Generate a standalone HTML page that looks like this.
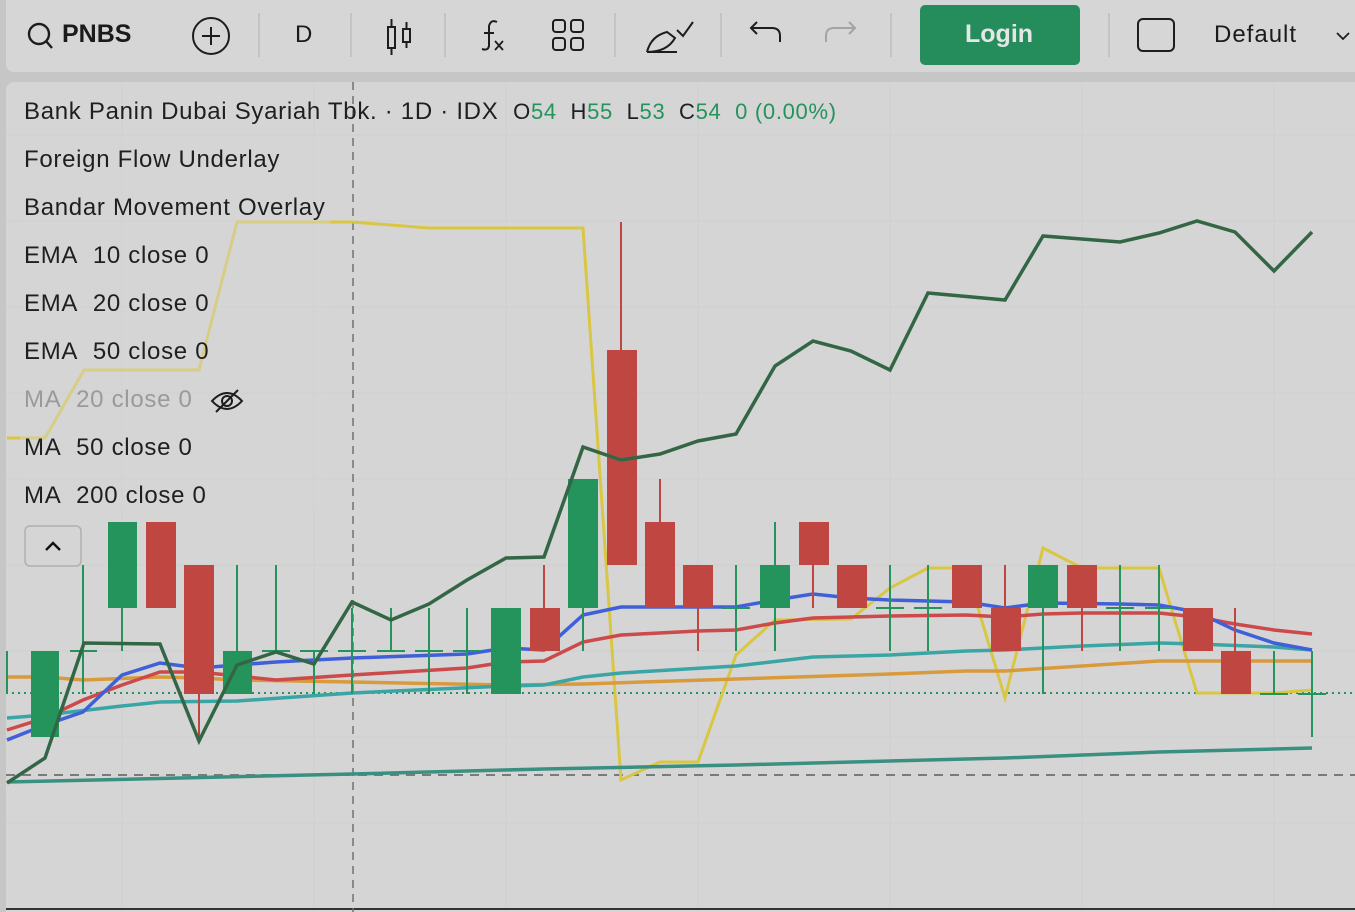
<!DOCTYPE html>
<html><head><meta charset="utf-8"><style>
body{margin:0;width:1355px;height:912px;overflow:hidden;background:#c6c6c6;font-family:"Liberation Sans",sans-serif;position:relative}
.tb{position:absolute;left:6px;top:0;width:1355px;height:72px;background:#d6d6d6;border-radius:0 0 8px 8px}
.chart{position:absolute;left:6px;top:82px;width:1349px;height:830px;background:#d5d5d5;border-radius:8px 0 0 0}
.t{position:absolute;font-size:24px;color:#1b1b1b;white-space:nowrap}
.sep{position:absolute;top:13px;width:2px;height:44px;background:#c4c4c4}
.lg{position:absolute;left:24px;font-size:24px;letter-spacing:0.7px;color:#1d1f22;white-space:nowrap}
.g{color:#24935c}
</style></head><body>
<div class="tb"></div>
<div class="chart"></div>
<svg style="position:absolute;left:0;top:0" width="1355" height="912">
<g fill="none" stroke="#1d1d1d" stroke-width="2.4">
<circle cx="39" cy="34" r="10"/><line x1="46" y1="41" x2="52" y2="48"/>
</g>
<g fill="none" stroke="#1d1d1d" stroke-width="2">
<circle cx="211" cy="36" r="18"/><line x1="211" y1="27" x2="211" y2="45"/><line x1="202" y1="36" x2="220" y2="36"/>
<rect x="388" y="27" width="7" height="21"/><line x1="391.5" y1="19" x2="391.5" y2="27"/><line x1="391.5" y1="48" x2="391.5" y2="55"/>
<rect x="403" y="29" width="7" height="13"/><line x1="406.5" y1="22" x2="406.5" y2="29"/><line x1="406.5" y1="42" x2="406.5" y2="48"/>
<path d="M497 22 q-6 -3 -8 4 l0 20 q-1 5 -7 3"/><line x1="484" y1="33" x2="494" y2="33"/><path d="M495 41 l8 9 M503 41 l-8 9" stroke-width="1.8"/>
<rect x="553" y="20" width="12" height="12" rx="3"/><rect x="571" y="20" width="12" height="12" rx="3"/><rect x="553" y="38" width="12" height="12" rx="3"/><rect x="571" y="38" width="12" height="12" rx="3"/>
<path d="M647 52 l30 0 M647 52 q4 -16 20 -20 l8 6 q-8 14 -28 14 M677 30 l6 6 l10 -14"/>
<path d="M757 34 l-6 -6 6 -6 M752 28 l20 0 q8 0 8 8 l0 6"/>
<rect x="1138" y="19" width="36" height="32" rx="5"/>
<path d="M1337 33 l6 6 6 -6" stroke-width="1.8"/>
</g>
<path d="M849 34 l6 -6 -6 -6 M854 28 l-20 0 q-8 0 -8 8 l0 6" fill="none" stroke="#a4a4a4" stroke-width="2"/>
<rect x="920" y="5" width="160" height="60" rx="5" fill="#258d5c"/>
<g stroke="#cecece" stroke-width="1">
<line x1="122" y1="82" x2="122" y2="908"/><line x1="314" y1="82" x2="314" y2="908"/><line x1="506" y1="82" x2="506" y2="908"/><line x1="698" y1="82" x2="698" y2="908"/><line x1="890" y1="82" x2="890" y2="908"/><line x1="1082" y1="82" x2="1082" y2="908"/><line x1="1274" y1="82" x2="1274" y2="908"/>
<line x1="6" y1="135" x2="1355" y2="135"/><line x1="6" y1="221" x2="1355" y2="221"/><line x1="6" y1="307" x2="1355" y2="307"/><line x1="6" y1="393" x2="1355" y2="393"/><line x1="6" y1="479" x2="1355" y2="479"/><line x1="6" y1="565" x2="1355" y2="565"/><line x1="6" y1="651" x2="1355" y2="651"/><line x1="6" y1="737" x2="1355" y2="737"/><line x1="6" y1="823" x2="1355" y2="823"/>
</g>
<line x1="6" y1="909" x2="1355" y2="909" stroke="#333" stroke-width="2"/>
<line x1="353" y1="82" x2="353" y2="912" stroke="#707070" stroke-width="1.5" stroke-dasharray="8,6"/>
<line x1="6" y1="775" x2="1355" y2="775" stroke="#7a7a7a" stroke-width="2" stroke-dasharray="9,7"/>
<line x1="6" y1="693" x2="1355" y2="693" stroke="#24935c" stroke-width="2" stroke-dasharray="2,4"/>
<polyline fill="none" stroke="#d9c642" stroke-width="3" points="7,438 45,438 84,370 199,370 237,222 352,222 429,228 583,228 621,780 660,762 698,762 736,655 775,620 851,619 890,588 928,568 966,568 1005,698 1043,548 1082,568 1159,568 1197,693 1274,693 1312,690"/>
<polyline fill="none" stroke="#d99a3c" stroke-width="3.5" points="7,677 45,677 83,680 160,677 199,678 237,680 352,682 506,685 583,684 736,679 890,674 966,671 1005,671 1159,661 1312,661"/>
<polyline fill="none" stroke="#3aa5a5" stroke-width="3.5" points="7,718 45,715 122,706 160,702 237,701 352,693 506,686 544,685 583,677 621,673 736,666 813,657 890,655 966,651 1005,650 1082,646 1159,643 1197,644 1274,647 1312,650"/>
<polyline fill="none" stroke="#cc4a4a" stroke-width="3.5" points="7,730 45,718 83,700 122,685 160,672 199,672 276,680 352,675 467,668 506,662 544,661 583,642 621,635 698,631 736,630 775,623 813,618 890,616 966,615 1005,617 1043,614 1082,613 1159,613 1197,617 1235,624 1274,630 1312,634"/>
<polyline fill="none" stroke="#3f60d8" stroke-width="3.5" points="7,740 45,725 83,712 122,675 160,663 199,668 237,665 276,662 352,658 467,654 506,648 544,650 583,615 621,607 736,607 775,600 813,594 851,598 890,600 966,602 1005,608 1043,603 1120,604 1159,605 1197,612 1235,630 1274,643 1312,650"/>
<polyline fill="none" stroke="#3a9080" stroke-width="3.5" points="7,782 352,774 544,769 736,765 1005,758 1159,752 1312,748"/>
<g stroke="#24935c" stroke-width="2" fill="#24935c">
<line x1="7" y1="651" x2="7" y2="694"/>
<line x1="45" y1="651" x2="45" y2="737"/><rect x="31" y="651" width="28" height="86" stroke="none"/>
<line x1="83" y1="565" x2="83" y2="694"/><line x1="70" y1="651" x2="97" y2="651"/>
<line x1="122" y1="522" x2="122" y2="651"/><rect x="108" y="522" width="29" height="86" stroke="none"/>
<line x1="237" y1="565" x2="237" y2="694"/><rect x="223" y="651" width="29" height="43" stroke="none"/>
<line x1="276" y1="565" x2="276" y2="651"/><line x1="262" y1="651" x2="290" y2="651"/>
<line x1="314" y1="651" x2="314" y2="694"/><line x1="300" y1="651" x2="328" y2="651"/>
<line x1="352" y1="608" x2="352" y2="694"/><line x1="338" y1="651" x2="366" y2="651"/>
<line x1="391" y1="608" x2="391" y2="651"/><line x1="377" y1="651" x2="405" y2="651"/>
<line x1="429" y1="608" x2="429" y2="694"/><line x1="415" y1="651" x2="443" y2="651"/>
<line x1="467" y1="608" x2="467" y2="694"/><line x1="453" y1="651" x2="481" y2="651"/>
<rect x="491" y="608" width="30" height="86" stroke="none"/>
<line x1="583" y1="479" x2="583" y2="651"/><rect x="568" y="479" width="30" height="129" stroke="none"/>
<line x1="736" y1="565" x2="736" y2="651"/><line x1="722" y1="608" x2="750" y2="608"/>
<line x1="775" y1="522" x2="775" y2="651"/><rect x="760" y="565" width="30" height="43" stroke="none"/>
<line x1="890" y1="565" x2="890" y2="651"/><line x1="876" y1="608" x2="904" y2="608"/>
<line x1="928" y1="565" x2="928" y2="651"/><line x1="914" y1="608" x2="942" y2="608"/>
<line x1="1043" y1="565" x2="1043" y2="694"/><rect x="1028" y="565" width="30" height="43" stroke="none"/>
<line x1="1120" y1="565" x2="1120" y2="651"/><line x1="1106" y1="608" x2="1134" y2="608"/>
<line x1="1159" y1="565" x2="1159" y2="651"/><line x1="1145" y1="608" x2="1173" y2="608"/>
<line x1="1274" y1="651" x2="1274" y2="694"/><line x1="1260" y1="694" x2="1288" y2="694"/>
<line x1="1312" y1="651" x2="1312" y2="737"/><line x1="1298" y1="694" x2="1326" y2="694"/>
</g>
<g stroke="#c04642" stroke-width="2" fill="#c04642">
<rect x="146" y="522" width="30" height="86" stroke="none"/>
<line x1="199" y1="565" x2="199" y2="737"/><rect x="184" y="565" width="30" height="129" stroke="none"/>
<line x1="544" y1="565" x2="544" y2="651"/><rect x="530" y="608" width="30" height="43" stroke="none"/>
<line x1="621" y1="222" x2="621" y2="565"/><rect x="607" y="350" width="30" height="215" stroke="none"/>
<line x1="660" y1="479" x2="660" y2="608"/><rect x="645" y="522" width="30" height="86" stroke="none"/>
<line x1="698" y1="565" x2="698" y2="651"/><rect x="683" y="565" width="30" height="43" stroke="none"/>
<line x1="813" y1="522" x2="813" y2="608"/><rect x="799" y="522" width="30" height="43" stroke="none"/>
<rect x="837" y="565" width="30" height="43" stroke="none"/>
<rect x="952" y="565" width="30" height="43" stroke="none"/>
<line x1="1005" y1="565" x2="1005" y2="651"/><rect x="991" y="608" width="30" height="43" stroke="none"/>
<line x1="1082" y1="565" x2="1082" y2="651"/><rect x="1067" y="565" width="30" height="43" stroke="none"/>
<rect x="1183" y="608" width="30" height="43" stroke="none"/>
<line x1="1235" y1="608" x2="1235" y2="694"/><rect x="1221" y="651" width="30" height="43" stroke="none"/>
</g>
<polyline fill="none" stroke="#336645" stroke-width="3.5" points="7,783 45,758 84,643 160,644 199,741 237,665 276,652 314,664 352,602 391,620 429,604 467,580 506,558 544,557 583,447 621,460 660,454 698,441 736,434 775,366 813,341 851,351 890,370 928,293 1005,300 1043,236 1120,242 1159,233 1197,221 1235,232 1274,271 1312,232"/>
<rect x="20" y="136" width="310" height="375" fill="#d5d5d5" opacity="0.45"/>
<rect x="25" y="526" width="56" height="40" rx="5" fill="#d5d5d5" stroke="#b0b0b0" stroke-width="1.5"/>
<path d="M46 550 l7 -7 7 7" fill="none" stroke="#111" stroke-width="2.4"/>
<g fill="none" stroke="#1d1d1d" stroke-width="2"><path d="M212 401 q15 -16 30 0 q-15 16 -30 0z"/><circle cx="227" cy="401" r="5"/><line x1="216" y1="412" x2="238" y2="390"/></g>
</svg>
<div class="t" style="left:62px;top:20px;font-weight:bold;font-size:25px">PNBS</div>
<div class="t" style="left:295px;top:21px">D</div>
<div class="t" style="left:965px;top:20px;color:#e6e6e6;font-weight:bold;font-size:25px">Login</div>
<div class="t" style="left:1214px;top:21px;letter-spacing:1px">Default</div>
<div class="sep" style="left:258px"></div><div class="sep" style="left:350px"></div><div class="sep" style="left:444px"></div><div class="sep" style="left:614px"></div><div class="sep" style="left:720px"></div><div class="sep" style="left:890px"></div><div class="sep" style="left:1108px"></div>
<div class="lg" style="top:98px">Bank Panin Dubai Syariah Tbk. · 1D · IDX &nbsp;<span style="font-size:22px">O<span class="g">54</span>&nbsp; H<span class="g">55</span>&nbsp; L<span class="g">53</span>&nbsp; C<span class="g">54&nbsp; 0 (0.00%)</span></span></div>
<div class="lg" style="top:146px">Foreign Flow Underlay</div>
<div class="lg" style="top:194px">Bandar Movement Overlay</div>
<div class="lg" style="top:242px">EMA&nbsp; 10 close 0</div>
<div class="lg" style="top:290px">EMA&nbsp; 20 close 0</div>
<div class="lg" style="top:338px">EMA&nbsp; 50 close 0</div>
<div class="lg" style="top:386px;color:#9a9a9a">MA&nbsp; 20 close 0</div>
<div class="lg" style="top:434px">MA&nbsp; 50 close 0</div>
<div class="lg" style="top:482px">MA&nbsp; 200 close 0</div>
</body></html>
